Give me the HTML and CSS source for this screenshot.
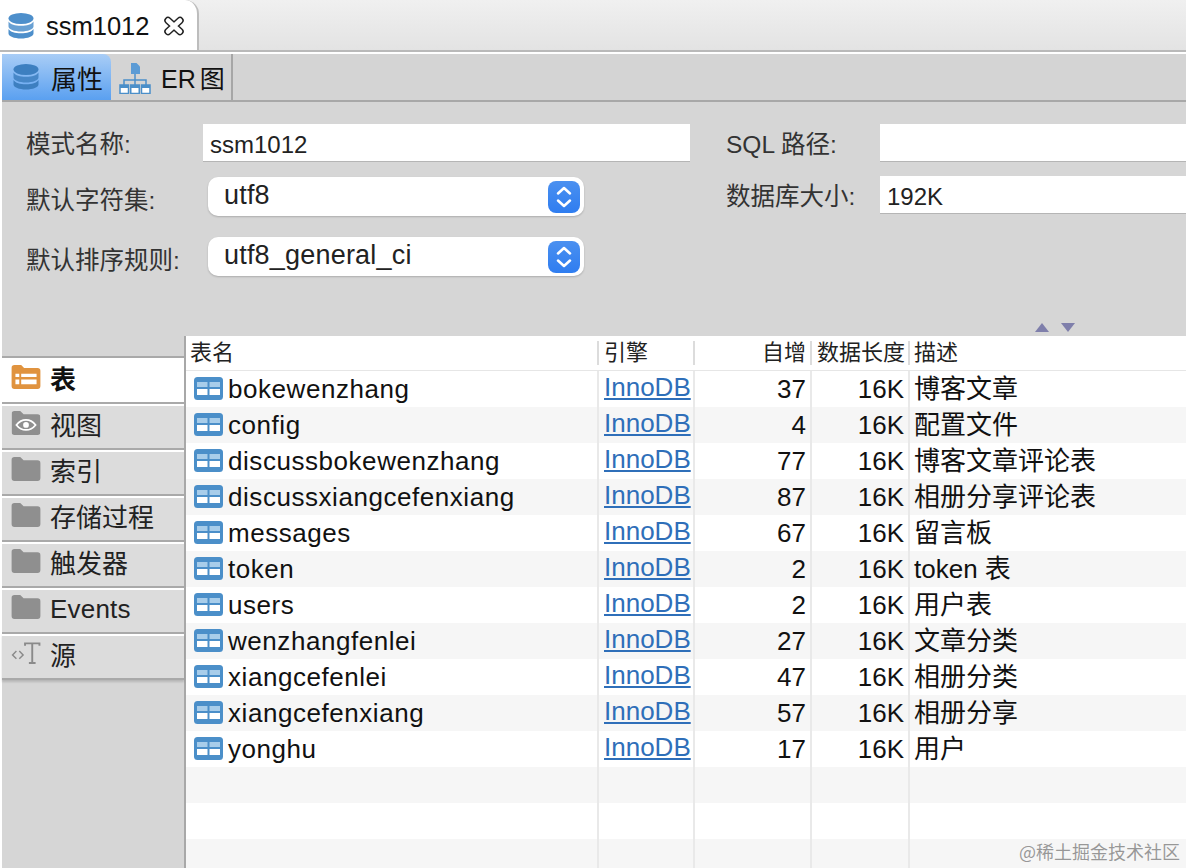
FILE: index.html
```html
<!DOCTYPE html>
<html lang="zh">
<head>
<meta charset="utf-8">
<title>ssm1012</title>
<link rel="stylesheet" href="styles.css">
</head>
<body>
<svg class="defs" width="0" height="0">
  <symbol id="db" viewBox="0 0 26 26">
    <ellipse cx="13" cy="5.500" rx="12.500" ry="5.500" fill="currentColor"/>
    <path d="M.5 8.500c2 3 6.500 4.300 12.500 4.300s10.500-1.300 12.500-4.300v5c0 2.800-5.600 5-12.500 5s-12.500-2.200-12.500-5z" fill="currentColor" opacity=".85"/>
    <path d="M.5 16c2 3 6.500 4.300 12.500 4.300S23.500 19 25.500 16v4.500c0 2.800-5.600 5-12.500 5s-12.500-2.200-12.500-5z" fill="currentColor"/>
  </symbol>
  <symbol id="tbl" viewBox="0 0 29 23">
    <rect width="29" height="23" rx="3.500" fill="#4b8fc9"/>
    <rect x="3" y="5" width="10.500" height="5" fill="#a8cdea"/>
    <rect x="15.500" y="5" width="10.500" height="5" fill="#a8cdea"/>
    <rect x="3" y="12" width="10.500" height="6" fill="#fff"/>
    <rect x="15.500" y="12" width="10.500" height="6" fill="#fff"/>
  </symbol>
  <symbol id="folder" viewBox="0 0 30 25">
    <path d="M0 3a3 3 0 0 1 3-3h6l3.500 3.500H27a3 3 0 0 1 3 3V22a3 3 0 0 1-3 3H3a3 3 0 0 1-3-3z" fill="#8f8f8f"/>
  </symbol>
</svg>

<header class="doc-tabs">
  <div class="doc-tab">
    <svg class="icon-db-tab"><use href="#db"/></svg>
    <span class="doc-tab-name">ssm1012</span>
    <svg class="icon-close" viewBox="0 0 22 20">
      <path d="M5 4.500 17 15.500M17 4.500 5 15.500" stroke="#222" stroke-width="7.500" stroke-linecap="round"/>
      <path d="M5 4.500 17 15.500M17 4.500 5 15.500" stroke="#fff" stroke-width="4.500" stroke-linecap="round"/>
    </svg>
  </div>
</header>

<main class="panel">
  <nav class="view-tabs">
    <div class="view-tab view-tab-active">
      <svg class="icon-db-view"><use href="#db"/></svg>
      <span>属性</span>
    </div>
    <div class="view-tab">
      <svg class="icon-er" viewBox="0 0 32 32" fill="none">
        <path d="M12 1h5.500L21 4.500V12h-9z" fill="#5b9bd5"/>
        <path d="M16 12v6M5 23v-5h22v5M16 18v5" stroke="#4b8fc9" stroke-width="1.500"/>
        <rect x="1" y="23" width="8.500" height="8.500" fill="#fff" stroke="#4b8fc9" stroke-width="1.500"/>
        <rect x="11.750" y="23" width="8.500" height="8.500" fill="#fff" stroke="#4b8fc9" stroke-width="1.500"/>
        <rect x="22.500" y="23" width="8.500" height="8.500" fill="#fff" stroke="#4b8fc9" stroke-width="1.500"/>
        <path d="M1 23h8.500v3H1zM11.750 23h8.500v3h-8.500zM22.500 23H31v3h-8.500z" fill="#4b8fc9"/>
      </svg>
      <span class="view-tab-er">ER 图</span>
    </div>
  </nav>

  <section class="form">
    <div class="form-col form-col-left">
      <div class="form-row form-row-first">
        <label class="form-label form-label-left">模式名称:</label>
        <div class="text-field text-field-left">ssm1012</div>
      </div>
      <div class="form-row form-row-select">
        <label class="form-label form-label-left">默认字符集:</label>
        <div class="select">
          <span class="select-value">utf8</span>
          <span class="stepper"><svg viewBox="0 0 20 26" fill="none" stroke="#fff" stroke-width="2.500" stroke-linecap="round" stroke-linejoin="round"><path d="M4 9.500 10 4l6 5.500M4 16.500 10 22l6-5.500"/></svg></span>
        </div>
      </div>
      <div class="form-row form-row-select form-row-select2">
        <label class="form-label form-label-left">默认排序规则:</label>
        <div class="select">
          <span class="select-value">utf8_general_ci</span>
          <span class="stepper"><svg viewBox="0 0 20 26" fill="none" stroke="#fff" stroke-width="2.500" stroke-linecap="round" stroke-linejoin="round"><path d="M4 9.500 10 4l6 5.500M4 16.500 10 22l6-5.500"/></svg></span>
        </div>
      </div>
    </div>
    <div class="form-col form-col-right">
      <div class="form-row form-row-first">
        <label class="form-label form-label-right">SQL 路径:</label>
        <div class="text-field text-field-right"></div>
      </div>
      <div class="form-row form-row-size">
        <label class="form-label form-label-right">数据库大小:</label>
        <div class="text-field text-field-right">192K</div>
      </div>
    </div>
    <div class="splitter" aria-hidden="true">
      <span class="tri tri-up"></span>
      <span class="tri tri-down"></span>
    </div>
  </section>

  <section class="bottom">
    <aside class="side">
      <div class="side-item side-item-active">
        <svg class="side-icon" viewBox="0 0 30 25">
          <path d="M0 3a3 3 0 0 1 3-3h7l3 3h14a3 3 0 0 1 3 3v16a3 3 0 0 1-3 3H3a3 3 0 0 1-3-3z" fill="#e0933f"/>
          <path d="M4 9h4v3.500H4zM10 9h16v3.500H10zM4 15h4v5H4zM10 15h16v5H10z" fill="#fff"/>
        </svg>
        <span class="side-label-strong">表</span>
      </div>
      <div class="side-item">
        <svg class="side-icon" viewBox="0 0 30 25">
          <use href="#folder"/>
          <path d="M5 14.500c5.500-7 14.500-7 20 0-5.500 7-14.500 7-20 0z" fill="none" stroke="#fff" stroke-width="1.800"/>
          <circle cx="15" cy="14.500" r="3" fill="#fff"/>
        </svg>
        <span>视图</span>
      </div>
      <div class="side-item"><svg class="side-icon"><use href="#folder"/></svg><span>索引</span></div>
      <div class="side-item"><svg class="side-icon"><use href="#folder"/></svg><span>存储过程</span></div>
      <div class="side-item"><svg class="side-icon"><use href="#folder"/></svg><span>触发器</span></div>
      <div class="side-item"><svg class="side-icon"><use href="#folder"/></svg><span class="side-label-latin">Events</span></div>
      <div class="side-item">
        <svg class="side-icon" viewBox="0 0 30 25" fill="none" stroke="#8a8a8a">
          <path d="M5 10.500 1 14.500l4 4M8 10.500l4 4-4 4" stroke-width="1.500"/>
          <path d="M14 5V2.500h15V5M21.500 2.500V23M18 23h7" stroke-width="2"/>
        </svg>
        <span>源</span>
      </div>
    </aside>

    <div class="grid-wrap">
      <div class="row row-head">
        <div class="cell">表名</div>
        <div class="cell">引擎</div>
        <div class="cell cell-num">自增</div>
        <div class="cell cell-num">数据长度</div>
        <div class="cell">描述</div>
      </div>
      <div class="row"><div class="cell cell-name"><svg class="tbl-icon"><use href="#tbl"/></svg><span>bokewenzhang</span></div><div class="cell"><a class="link">InnoDB</a></div><div class="cell cell-num">37</div><div class="cell cell-num">16K</div><div class="cell">博客文章</div></div>
      <div class="row"><div class="cell cell-name"><svg class="tbl-icon"><use href="#tbl"/></svg><span>config</span></div><div class="cell"><a class="link">InnoDB</a></div><div class="cell cell-num">4</div><div class="cell cell-num">16K</div><div class="cell">配置文件</div></div>
      <div class="row"><div class="cell cell-name"><svg class="tbl-icon"><use href="#tbl"/></svg><span>discussbokewenzhang</span></div><div class="cell"><a class="link">InnoDB</a></div><div class="cell cell-num">77</div><div class="cell cell-num">16K</div><div class="cell">博客文章评论表</div></div>
      <div class="row"><div class="cell cell-name"><svg class="tbl-icon"><use href="#tbl"/></svg><span>discussxiangcefenxiang</span></div><div class="cell"><a class="link">InnoDB</a></div><div class="cell cell-num">87</div><div class="cell cell-num">16K</div><div class="cell">相册分享评论表</div></div>
      <div class="row"><div class="cell cell-name"><svg class="tbl-icon"><use href="#tbl"/></svg><span>messages</span></div><div class="cell"><a class="link">InnoDB</a></div><div class="cell cell-num">67</div><div class="cell cell-num">16K</div><div class="cell">留言板</div></div>
      <div class="row"><div class="cell cell-name"><svg class="tbl-icon"><use href="#tbl"/></svg><span>token</span></div><div class="cell"><a class="link">InnoDB</a></div><div class="cell cell-num">2</div><div class="cell cell-num">16K</div><div class="cell">token 表</div></div>
      <div class="row"><div class="cell cell-name"><svg class="tbl-icon"><use href="#tbl"/></svg><span>users</span></div><div class="cell"><a class="link">InnoDB</a></div><div class="cell cell-num">2</div><div class="cell cell-num">16K</div><div class="cell">用户表</div></div>
      <div class="row"><div class="cell cell-name"><svg class="tbl-icon"><use href="#tbl"/></svg><span>wenzhangfenlei</span></div><div class="cell"><a class="link">InnoDB</a></div><div class="cell cell-num">27</div><div class="cell cell-num">16K</div><div class="cell">文章分类</div></div>
      <div class="row"><div class="cell cell-name"><svg class="tbl-icon"><use href="#tbl"/></svg><span>xiangcefenlei</span></div><div class="cell"><a class="link">InnoDB</a></div><div class="cell cell-num">47</div><div class="cell cell-num">16K</div><div class="cell">相册分类</div></div>
      <div class="row"><div class="cell cell-name"><svg class="tbl-icon"><use href="#tbl"/></svg><span>xiangcefenxiang</span></div><div class="cell"><a class="link">InnoDB</a></div><div class="cell cell-num">57</div><div class="cell cell-num">16K</div><div class="cell">相册分享</div></div>
      <div class="row"><div class="cell cell-name"><svg class="tbl-icon"><use href="#tbl"/></svg><span>yonghu</span></div><div class="cell"><a class="link">InnoDB</a></div><div class="cell cell-num">17</div><div class="cell cell-num">16K</div><div class="cell">用户</div></div>
      <div class="row"><div class="cell"></div><div class="cell"></div><div class="cell"></div><div class="cell"></div><div class="cell"></div></div>
      <div class="row"><div class="cell"></div><div class="cell"></div><div class="cell"></div><div class="cell"></div><div class="cell"></div></div>
      <div class="row"><div class="cell"></div><div class="cell"></div><div class="cell"></div><div class="cell"></div><div class="cell"></div></div>
    </div>
  </section>
</main>

<div class="watermark">@稀土掘金技术社区</div>
</body>
</html>
```

FILE: styles.css
```css
* { box-sizing: border-box; }

html, body {
  margin: 0;
  height: 868px;
  overflow: hidden;
}

body {
  position: relative;
  background: #fff;
  color: #111;
  font-family: "Liberation Sans", "Noto Sans CJK SC", sans-serif;
  font-size: 26px;
}

.defs { position: absolute; }

/* document tabs */
.doc-tabs {
  height: 54px;
  padding-bottom: 4px;
  background: #fff;
}

.doc-tabs::before {
  content: "";
  position: absolute;
  left: 0;
  right: 0;
  top: 0;
  height: 50px;
  background: linear-gradient(#f0f0f0, #e3e3e3);
  border-bottom: 2px solid #b9b9b9;
}

.doc-tab {
  position: relative;
  display: flex;
  align-items: center;
  width: 199px;
  height: 50px;
  padding: 2px 0 0 8px;
  background: #fff;
  border-right: 2px solid #bdbdbd;
  border-top-right-radius: 14px;
}

.icon-db-tab {
  width: 26px;
  height: 26px;
  color: #4d8fcb;
}

.doc-tab-name {
  margin-left: 12px;
  font-size: 25.500px;
}

.icon-close {
  width: 22px;
  height: 20px;
  margin-left: 14px;
}

/* panel */
.panel {
  display: flex;
  flex-direction: column;
  height: 814px;
  background: #d6d6d6;
  border-left: 2px solid #fff;
}

.view-tabs {
  display: flex;
  height: 48px;
  border-bottom: 2px solid #a8a8a8;
  background: #d4d4d4;
}

.view-tab {
  display: flex;
  align-items: center;
  width: 122px;
  padding-left: 8px;
  font-size: 25px;
  border-right: 2px solid #a6a6a6;
}

.view-tab-active {
  width: 109px;
  padding-left: 11px;
  font-size: 26px;
  background: linear-gradient(#a9cdf6, #5aa0f0);
  border-right: 0;
  border-top-right-radius: 8px;
}

.view-tab-er { word-spacing: -3px; }

.icon-db-view {
  width: 26px;
  height: 26px;
  margin-right: 12px;
  color: #3d7fc0;
}

.icon-er {
  width: 32px;
  height: 32px;
  margin-right: 10px;
  margin-top: 2px;
}

/* form */
.form {
  position: relative;
  display: flex;
  height: 234px;
  padding: 22px 0 0 24px;
}

.form-col-left { width: 700px; }
.form-col-right { flex: 1; }

.form-row {
  display: flex;
  align-items: center;
  color: #333;
}

.form-row-first { height: 38px; }
.form-row-select { height: 39px; margin-top: 15px; }
.form-row-select2 { margin-top: 21px; }
.form-row-size { height: 38px; margin-top: 14px; }

.form-label {
  flex: none;
  font-size: 24.500px;
  white-space: nowrap;
  padding-bottom: 2px;
}

.form-row-select .form-label { padding: 3px 0 0; }

.form-label-left { width: 177px; }
.form-label-right { width: 154px; }

.text-field {
  height: 38px;
  padding: 5px 7px 0;
  background: #fff;
  border-bottom: 1px solid #b5b5b5;
  font-size: 24px;
  line-height: 32px;
  color: #222;
}

.text-field-left { width: 487px; }
.text-field-right { flex: 1; }

.select {
  display: flex;
  align-items: center;
  justify-content: space-between;
  width: 376px;
  height: 39px;
  margin-left: 5px;
  padding: 0 4px 0 16px;
  background: #fff;
  border-radius: 10px;
  font-size: 27px;
  letter-spacing: .2px;
  color: #222;
  box-shadow: 0 1px 2px rgba(0, 0, 0, .2);
}

.select-value { padding-bottom: 3px; }

.stepper {
  display: flex;
  align-items: center;
  justify-content: center;
  width: 32px;
  height: 32px;
  border-radius: 8px;
  background: linear-gradient(#4a90f0, #2f7df0);
}

.stepper svg {
  width: 20px;
  height: 26px;
}

.splitter {
  position: absolute;
  left: 1033px;
  top: 221px;
  display: flex;
  gap: 12px;
}

.tri {
  width: 0;
  height: 0;
  border-left: 7.500px solid transparent;
  border-right: 7.500px solid transparent;
}

.tri-up { border-bottom: 9px solid #7f7fab; }
.tri-down { border-top: 9px solid #7f7fab; }

/* bottom split */
.bottom {
  display: flex;
  flex: 1;
  min-height: 0;
}

.side {
  flex: none;
  width: 184px;
  padding-top: 20px;
  border-right: 2px solid #a8a8a8;
}

.side-item {
  display: flex;
  align-items: center;
  height: 46px;
  padding: 0 0 8px 9px;
  background: #dcdcdc;
  border-top: 2px solid #fff;
  border-bottom: 2px solid #a9a9a9;
  font-size: 26px;
  color: #222;
}

.side-item:last-child {
  box-shadow: 0 2px 2px rgba(0, 0, 0, .15);
}

.side-item-active {
  height: 48px;
  padding-bottom: 6px;
  background: #fff;
  border-top: 2px solid #a9a9a9;
  color: #111;
}

.side-label-strong { font-weight: 700; }
.side-label-latin { padding-top: 4px; letter-spacing: .2px; }

.side-icon {
  flex: none;
  width: 30px;
  height: 24px;
  margin: -1px 9px 0 0;
}

/* table */
.grid-wrap {
  flex: 1;
  min-width: 0;
  background: #fff;
}

.row {
  display: grid;
  grid-template-columns: 413px 96px 117px 98px 1fr;
  height: 36px;
  line-height: 36px;
  white-space: nowrap;
}

.row:nth-child(odd) { background: #f6f6f6; }

.row-head {
  height: 35px;
  line-height: 33px;
  font-size: 22px;
  color: #222;
  background: #fff;
  border-bottom: 1px solid #e6e6e6;
}

.row-head:nth-child(odd) { background: #fff; }

.cell {
  padding: 0 4px 0 5px;
  border-right: 2px solid #e9e9e9;
  overflow: hidden;
}

.cell:last-child { border-right: 0; padding-left: 4px; }
.cell-num { text-align: right; }

.row-head .cell {
  border-right: 0;
  padding-right: 6px;
  background: linear-gradient(#dcdcdc, #dcdcdc) right center / 2px 24px no-repeat;
}

.row-head .cell:first-child { padding-left: 4px; }
.row-head .cell:last-child { background: none; }

.cell-name {
  display: flex;
  align-items: center;
  padding-left: 8px;
  letter-spacing: .55px;
}

.tbl-icon {
  flex: none;
  width: 29px;
  height: 23px;
  margin: -2px 5px 0 0;
}

.link {
  display: block;
  margin-top: -2px;
  color: #2f6fb9;
  text-decoration: underline;
}

.watermark {
  position: absolute;
  right: 6px;
  bottom: 6px;
  font-size: 18px;
  line-height: 22px;
  color: rgba(120, 120, 120, .75);
  font-family: "Noto Sans CJK SC", sans-serif;
}
```
